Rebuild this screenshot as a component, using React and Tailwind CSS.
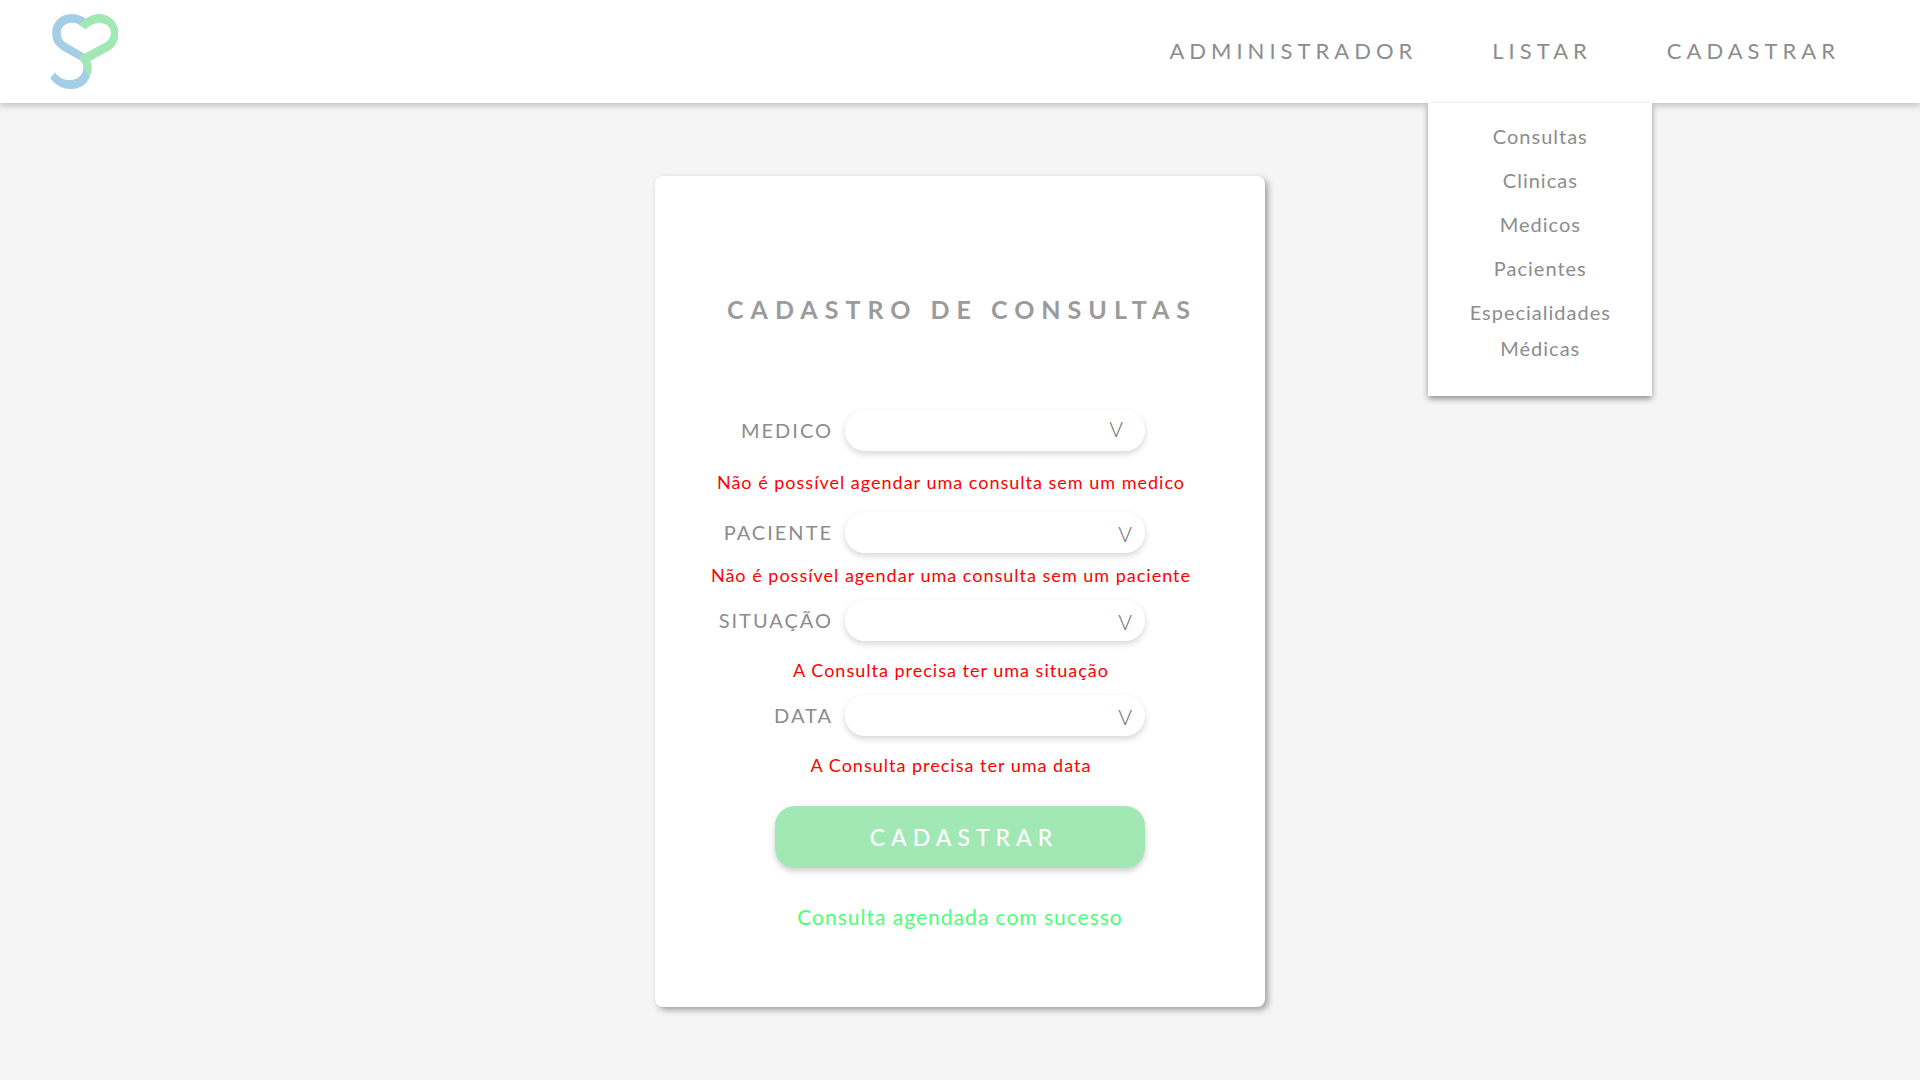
const navLinks = ["ADMINISTRADOR", "LISTAR", "CADASTRAR"];

const listItems = ["Consultas", "Clinicas", "Medicos", "Pacientes", "Especialidades Médicas"];

const fields = [
  {
    id: "medico",
    label: "MEDICO",
    error: "Não é possível agendar uma consulta sem um medico",
    arrow: "right-[22px] top-[5px]",
    spacing: "pt-[19px] pb-[18px]",
  },
  {
    id: "paciente",
    label: "PACIENTE",
    error: "Não é possível agendar uma consulta sem um paciente",
    arrow: "right-[13px] top-2",
    spacing: "pt-[10px] pb-[13px]",
  },
  {
    id: "situacao",
    label: "SITUAÇÃO",
    error: "A Consulta precisa ter uma situação",
    arrow: "right-[13px] top-2",
    spacing: "pt-[17px] pb-[13px]",
  },
  {
    id: "data",
    label: "DATA",
    error: "A Consulta precisa ter uma data",
    arrow: "right-[13px] top-2",
    spacing: "pt-[17px] pb-[29px]",
  },
];

function Logo() {
  return (
    <svg viewBox="60 41 204 226" className="h-[75px] w-[68px]" role="img" aria-label="SP Medical">
      <path
        d="M168 55 C155 46 140 41 123 41 C91 41 66 66 66 99 C66 125 78 139 103 154 L146 178 C157 184 160 192 160 202 C160 224 142 240 120 240 C101 240 86 232 75 217 L60 234 C75 255 97 267 121 267 C149 267 170 253 178 232 L182 200 L166 162 L112 131 C98 122 92 112 92 98 C92 80 106 67 125 67 C137 67 145 71 151 76 Z"
        fill="#a3cee6"
      />
      <path
        d="M148 75 C160 56 183 41 209 41 C240 41 266 68 266 99 C266 125 255 141 236 152 L181 183 C187 196 188 213 178 232 C168 215 160 200 158 188 L146 170 L164 160 L222 129 C236 121 243 112 243 98 C243 80 229 68 209 68 C190 68 176 77 167 88 Z"
        fill="#a1e8b5"
      />
    </svg>
  );
}

function Header() {
  return (
    <header className="relative z-10 flex h-[103px] items-center justify-between bg-white pr-20 pl-[50px] shadow-[0_3px_6px_rgba(0,0,0,0.2)]">
      <a href="#inicio">
        <Logo />
      </a>
      <nav className="flex gap-[75px] pb-0.5 text-[22px] leading-7 tracking-[5px] text-[#8c8c8c]">
        {navLinks.map((name) => (
          <div key={name} className="relative">
            <a href={"#" + name.toLowerCase()}>{name}</a>
            {name === "LISTAR" && (
              <ul className="absolute top-[66px] -left-16 flex w-56 flex-col gap-2 bg-white px-8 pt-[15px] pb-[30px] text-center text-xl leading-9 tracking-[1px] shadow-[0_3px_6px_rgba(0,0,0,0.4)]">
                {listItems.map((item) => (
                  <li key={item}>
                    <a href={"#" + item}>{item}</a>
                  </li>
                ))}
              </ul>
            )}
          </div>
        ))}
      </nav>
    </header>
  );
}

function Field({ id, label, error, arrow, spacing }) {
  return (
    <div>
      <div className="flex items-center">
        <label htmlFor={id} className="w-[178px] pb-0.5 text-right text-xl leading-7 tracking-[2px] text-[#8c8c8c]">
          {label}
        </label>
        <div className="relative ml-3 w-[300px]">
          <select
            id={id}
            aria-describedby={id + "-erro"}
            className="block h-[41px] w-full appearance-none rounded-[20px] bg-white px-5 shadow-[0_3px_6px_rgba(0,0,0,0.16)] outline-none"
          />
          <span aria-hidden="true" className={"pointer-events-none absolute text-[21px] leading-7 font-light text-[#707070] " + arrow}>
            V
          </span>
        </div>
      </div>
      <p id={id + "-erro"} className={"pr-[18px] text-center text-lg leading-6 tracking-[1px] text-[#ff0000] " + spacing}>
        {error}
      </p>
    </div>
  );
}

export default function App() {
  return (
    <div className="min-h-screen bg-[#f5f5f5] font-['Lato',sans-serif]">
      <Header />
      <main className="flex justify-center pt-[73px] pb-[73px]">
        <form className="w-[610px] rounded-lg bg-white pt-[117px] pb-[74px] shadow-[3px_3px_6px_rgba(0,0,0,0.35)]">
          <h1 className="pl-1 text-center text-[25px] leading-8 font-bold tracking-[7px] text-[#9b9b9b]">
            CADASTRO DE CONSULTAS
          </h1>
          <div className="pt-[85px]">
            {fields.map((field) => (
              <Field key={field.id} {...field} />
            ))}
          </div>
          <button
            type="button"
            className="mx-auto block h-[62px] w-[370px] rounded-[20px] bg-[#a1e8b5] pl-2 text-[23px] leading-8 font-medium tracking-[6px] text-white shadow-[0_3px_6px_rgba(0,0,0,0.2)]"
          >
            CADASTRAR
          </button>
          <p role="status" className="pt-[33px] text-center text-[21px] leading-8 tracking-[1px] text-[#4dff77]">
            Consulta agendada com sucesso
          </p>
        </form>
      </main>
    </div>
  );
}
